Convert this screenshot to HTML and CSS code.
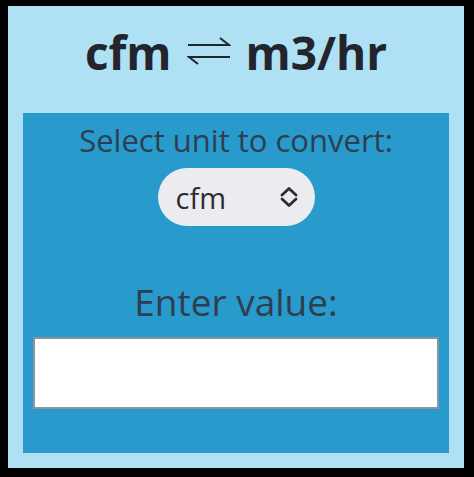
FILE: index.html
```html
<!DOCTYPE html>
<html>
<head>
<meta charset="utf-8">
<link rel="stylesheet" href="styles.css">
</head>
<body>
<div class="card">
  <h1 class="title"><span>cfm</span><svg class="arrows" width="44" height="30" viewBox="0 0 44 30" aria-label="⇌"><path d="M1 9 H42 L33 2 M43 21 H2 L11 28" fill="none" stroke="#22252b" stroke-width="2" stroke-linejoin="miter"/></svg><span>m3/hr</span></h1>
  <div class="inner">
    <div class="label">Select unit to convert:</div>
    <div class="select">
      <span class="select-text">cfm</span>
      <svg class="chev" width="22" height="24" viewBox="0 0 22 24"><path d="M4 10 L11 3.5 L18 10 M4 14 L11 20.5 L18 14" fill="none" stroke="#2a2d33" stroke-width="2.8" stroke-linecap="round" stroke-linejoin="round"/></svg>
    </div>
    <div class="label big">Enter value:</div>
    <div class="input"></div>
  </div>
</div>
</body>
</html>
```
FILE: styles.css
```css
html, body { margin: 0; padding: 0; }
body { background: #000; width: 474px; height: 477px; overflow: hidden; font-family: "Open Sans", "Noto Sans", sans-serif; }
.card {
  margin: 6px 0 0 8px;
  width: 456px;
  height: 462px;
  box-sizing: border-box;
  background: #b0e0f4;
  padding: 0 15px 15px 15px;
  display: flex;
  flex-direction: column;
}
.title {
  margin: 0;
  height: 107px;
  box-sizing: border-box;
  padding-top: 23px;
  display: flex;
  align-items: flex-start;
  justify-content: center;
  font-size: 46px;
  line-height: 46px;
  font-weight: 700;
  color: #22252b;
}
.arrows { margin: 7px 15px 0 15px; }
.inner {
  flex: 1;
  background: #289bcc;
  display: flex;
  flex-direction: column;
  align-items: center;
  padding: 12px 10px 0;
}
.label { font-size: 31px; line-height: 31px; color: #2f3e50; }
.select {
  margin-top: 12px;
  width: 157px;
  height: 58px;
  border-radius: 29px;
  background: #ececf0;
  display: flex;
  align-items: center;
  justify-content: space-between;
  box-sizing: border-box;
  padding: 0 15px 0 18px;
}
.select-text { font-size: 29px; color: #2a2d33; }
.label.big { font-size: 37px; line-height: 37px; margin-top: 57px; }
.input {
  margin-top: 17px;
  width: 406px;
  height: 72px;
  box-sizing: border-box;
  background: #fff;
  border: 2px solid #8a95a3;
}
```
